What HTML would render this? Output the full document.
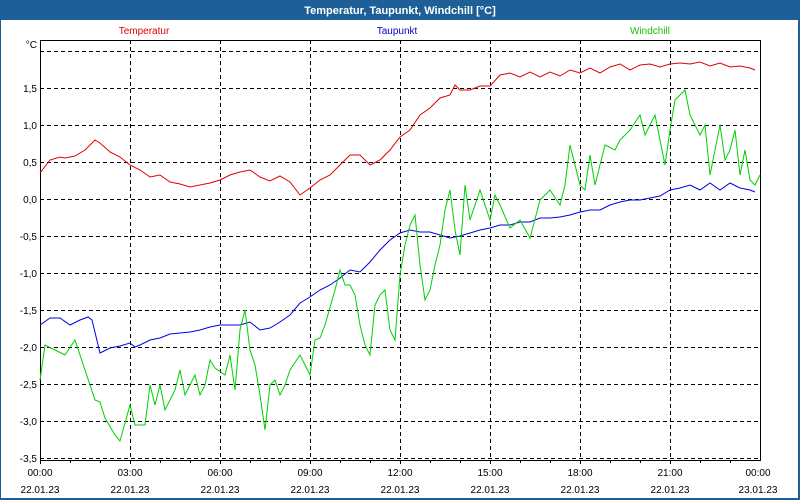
<!DOCTYPE html>
<html><head><meta charset="utf-8"><style>
html,body{margin:0;padding:0;width:800px;height:500px;overflow:hidden;background:#fff}
svg{display:block}
text{font-family:"Liberation Sans",sans-serif;font-size:10px}
</style></head><body>
<svg width="800" height="500" viewBox="0 0 800 500">
<rect x="0" y="0" width="800" height="500" fill="#1d5f96"/>
<rect x="1" y="20" width="797" height="478" fill="#fff"/>
<text x="400" y="14" text-anchor="middle" fill="#fff" font-weight="bold" style="font-size:11px">Temperatur, Taupunkt, Windchill [°C]</text>
<text x="144" y="34" text-anchor="middle" fill="#e00000">Temperatur</text>
<text x="397" y="34" text-anchor="middle" fill="#0000d0">Taupunkt</text>
<text x="650" y="34" text-anchor="middle" fill="#20c000">Windchill</text>
<g stroke="#000" stroke-width="1" stroke-dasharray="4,3" fill="none">
<path d="M40 51.5H760M40 88.5H760M40 125.5H760M40 162.5H760M40 199.5H760M40 236.5H760M40 273.5H760M40 310.5H760M40 347.5H760M40 384.5H760M40 421.5H760M40 458.5H760"/>
<path d="M130.5 40V460M220.5 40V460M310.5 40V460M400.5 40V460M490.5 40V460M580.5 40V460M670.5 40V460"/>
</g>
<rect x="40.5" y="40.5" width="720" height="420" fill="none" stroke="#000"/>
<path d="M40.5 460v4M70.5 460v3M100.5 460v3M130.5 460v4M160.5 460v3M190.5 460v3M220.5 460v4M250.5 460v3M280.5 460v3M310.5 460v4M340.5 460v3M370.5 460v3M400.5 460v4M430.5 460v3M460.5 460v3M490.5 460v4M520.5 460v3M550.5 460v3M580.5 460v4M610.5 460v3M640.5 460v3M670.5 460v4M700.5 460v3M730.5 460v3" stroke="#000"/>
<g text-anchor="end" fill="#000">
<text x="37" y="48">°C</text>
<text x="37" y="92">1,5</text><text x="37" y="129">1,0</text><text x="37" y="166">0,5</text><text x="37" y="203">0,0</text>
<text x="37" y="240">-0,5</text><text x="37" y="277">-1,0</text><text x="37" y="314">-1,5</text><text x="37" y="351">-2,0</text>
<text x="37" y="388">-2,5</text><text x="37" y="425">-3,0</text><text x="37" y="462">-3,5</text>
</g>
<g text-anchor="middle" fill="#000">
<text x="40" y="476">00:00</text><text x="40" y="493">22.01.23</text>
<text x="130" y="476">03:00</text><text x="130" y="493">22.01.23</text>
<text x="220" y="476">06:00</text><text x="220" y="493">22.01.23</text>
<text x="310" y="476">09:00</text><text x="310" y="493">22.01.23</text>
<text x="400" y="476">12:00</text><text x="400" y="493">22.01.23</text>
<text x="490" y="476">15:00</text><text x="490" y="493">22.01.23</text>
<text x="580" y="476">18:00</text><text x="580" y="493">22.01.23</text>
<text x="670" y="476">21:00</text><text x="670" y="493">22.01.23</text>
<text x="758" y="476">00:00</text><text x="758" y="493">23.01.23</text>
</g>
<polyline fill="none" stroke="#e00000" stroke-width="1" points="40,173 50,160 60,157 65,158 75,156 85,150 95,140 100,143 110,152 120,157 130,165 140,170 150,177 160,175 170,182 180,184 190,187 200,185 210,183 220,180 230,175 240,172 250,170 260,177 270,181 280,176 290,182 300,195 310,188 320,180 330,175 340,165 350,155 360,155 370,165 380,160 390,150 400,137 410,130 420,115 430,108 440,98 450,95 455,85 460,90 470,90 480,86 490,86 500,75 510,73 520,77 530,72 540,77 550,72 560,76 570,70 580,73 590,68 600,73 610,67 620,64 630,70 640,65 650,64 660,67 670,64 680,63 690,64 700,62 710,66 720,63 730,67 740,66 750,68 755,70"/>
<polyline fill="none" stroke="#0000e0" stroke-width="1" points="40,325 50,318 60,318 70,325 80,320 88,317 92,320 100,353 110,348 120,346 130,343 135,347 140,345 150,340 160,338 170,334 180,333 190,332 200,330 210,327 220,325 240,325 250,322 260,330 270,328 280,322 290,315 300,303 310,297 320,290 330,285 340,278 350,270 360,272 370,262 380,250 390,240 400,233 410,230 420,232 430,232 440,235 450,238 460,236 470,233 480,230 490,228 500,225 510,225 520,222 530,222 540,218 550,218 560,217 570,215 580,212 590,210 600,210 610,205 620,202 630,200 640,200 650,198 660,196 670,190 680,188 690,185 700,190 710,183 720,190 730,183 740,188 750,190 755,192"/>
<polyline fill="none" stroke="#00d000" stroke-width="1" points="40,380 45,345 55,350 65,355 75,340 80,355 85,370 90,385 95,400 100,402 105,418 115,435 120,441 130,405 135,425 145,425 150,385 155,405 160,385 165,410 175,390 180,370 185,395 195,375 200,395 205,385 210,360 215,368 225,375 230,355 235,390 240,330 245,310 250,350 255,365 260,395 265,430 270,385 275,380 280,395 285,385 290,370 300,355 310,375 315,340 320,338 325,325 335,290 340,270 345,285 350,285 355,295 360,325 365,345 370,355 375,305 380,295 385,290 390,330 395,340 400,275 405,245 410,225 415,215 420,265 425,300 430,290 435,265 440,245 445,210 450,190 455,230 460,255 465,185 470,220 480,190 490,220 495,195 500,205 510,228 520,220 530,238 540,200 550,190 560,205 565,185 570,145 575,165 580,185 585,190 590,155 595,185 605,145 615,150 620,140 630,130 640,115 645,135 650,125 655,115 660,140 665,165 670,130 675,100 680,95 685,90 690,115 700,135 705,125 710,175 715,150 720,125 725,160 730,150 735,130 740,175 745,150 750,180 755,185 760,175"/>
</svg>
</body></html>
